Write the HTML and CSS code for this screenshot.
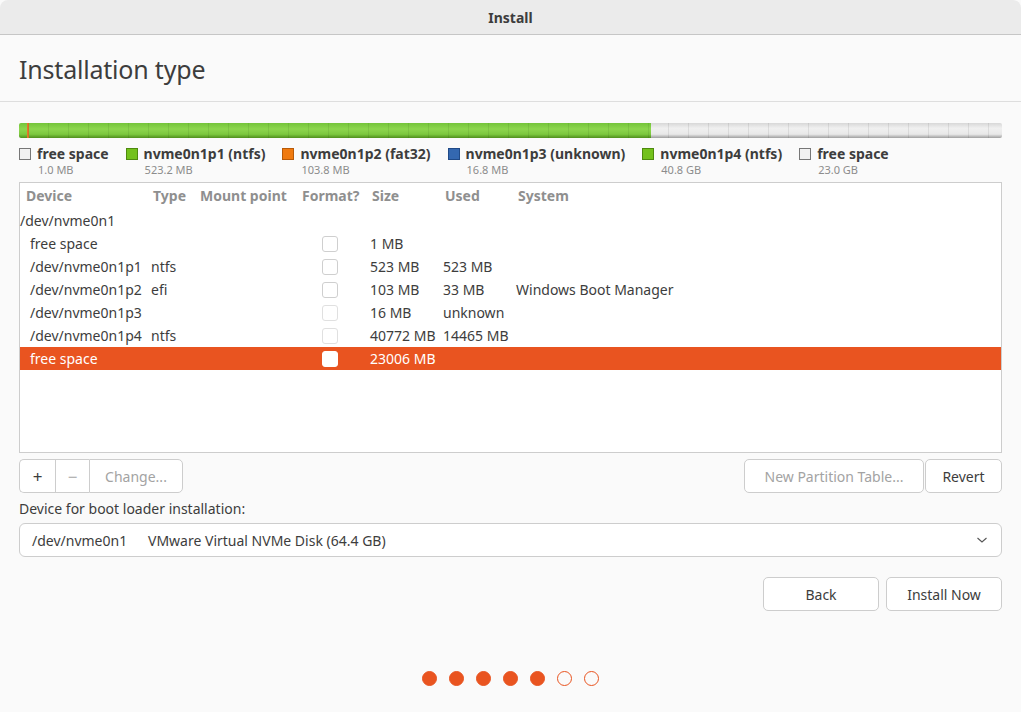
FILE: index.html
```html
<!DOCTYPE html>
<html>
<head>
<meta charset="utf-8">
<link rel="stylesheet" href="styles.css">
</head>
<body>
<div class="window">
  <div class="titlebar">Install</div>
  <div class="content">
    <h1 class="page-title">Installation type</h1>
    <div class="main">
      <div class="pbar">
        <div class="seg seg-free" style="width:0.2px"></div>
        <div class="seg seg-green" style="width:8px"></div>
        <div class="seg seg-orange" style="width:2px"></div>
        <div class="seg seg-blue" style="width:0.3px"></div>
        <div class="seg seg-green" style="width:622px"></div>
        <div class="seg seg-free grow"></div>
      </div>
      <div class="legend">
        <div class="lg-item">
          <span class="swatch sw-free"></span>
          <div class="lg-text"><div class="lg-name">free space</div><div class="lg-size">1.0 MB</div></div>
        </div>
        <div class="lg-item">
          <span class="swatch sw-green"></span>
          <div class="lg-text"><div class="lg-name">nvme0n1p1 (ntfs)</div><div class="lg-size">523.2 MB</div></div>
        </div>
        <div class="lg-item">
          <span class="swatch sw-orange"></span>
          <div class="lg-text"><div class="lg-name">nvme0n1p2 (fat32)</div><div class="lg-size">103.8 MB</div></div>
        </div>
        <div class="lg-item">
          <span class="swatch sw-blue"></span>
          <div class="lg-text"><div class="lg-name">nvme0n1p3 (unknown)</div><div class="lg-size">16.8 MB</div></div>
        </div>
        <div class="lg-item">
          <span class="swatch sw-green"></span>
          <div class="lg-text"><div class="lg-name">nvme0n1p4 (ntfs)</div><div class="lg-size">40.8 GB</div></div>
        </div>
        <div class="lg-item">
          <span class="swatch sw-free"></span>
          <div class="lg-text"><div class="lg-name">free space</div><div class="lg-size">23.0 GB</div></div>
        </div>
      </div>

      <div class="table">
        <div class="row head">
          <div class="c c-dev">Device</div>
          <div class="c c-type">Type</div>
          <div class="c c-mount">Mount point</div>
          <div class="c c-fmt">Format?</div>
          <div class="c c-size">Size</div>
          <div class="c c-used">Used</div>
          <div class="c c-sys">System</div>
        </div>
        <div class="row disk"><div class="c">/dev/nvme0n1</div></div>
        <div class="row">
          <div class="c c-dev ind">free space</div><div class="c c-type"></div><div class="c c-mount"></div>
          <div class="c c-fmt"><span class="cb"></span></div>
          <div class="c c-size">1 MB</div><div class="c c-used"></div><div class="c c-sys"></div>
        </div>
        <div class="row">
          <div class="c c-dev ind">/dev/nvme0n1p1</div><div class="c c-type">ntfs</div><div class="c c-mount"></div>
          <div class="c c-fmt"><span class="cb"></span></div>
          <div class="c c-size">523 MB</div><div class="c c-used">523 MB</div><div class="c c-sys"></div>
        </div>
        <div class="row">
          <div class="c c-dev ind">/dev/nvme0n1p2</div><div class="c c-type">efi</div><div class="c c-mount"></div>
          <div class="c c-fmt"><span class="cb"></span></div>
          <div class="c c-size">103 MB</div><div class="c c-used">33 MB</div><div class="c c-sys">Windows Boot Manager</div>
        </div>
        <div class="row">
          <div class="c c-dev ind">/dev/nvme0n1p3</div><div class="c c-type"></div><div class="c c-mount"></div>
          <div class="c c-fmt"><span class="cb dim"></span></div>
          <div class="c c-size">16 MB</div><div class="c c-used">unknown</div><div class="c c-sys"></div>
        </div>
        <div class="row">
          <div class="c c-dev ind">/dev/nvme0n1p4</div><div class="c c-type">ntfs</div><div class="c c-mount"></div>
          <div class="c c-fmt"><span class="cb dim"></span></div>
          <div class="c c-size">40772 MB</div><div class="c c-used">14465 MB</div><div class="c c-sys"></div>
        </div>
        <div class="row sel">
          <div class="c c-dev ind">free space</div><div class="c c-type"></div><div class="c c-mount"></div>
          <div class="c c-fmt"><span class="cb white"></span></div>
          <div class="c c-size">23006 MB</div><div class="c c-used"></div><div class="c c-sys"></div>
        </div>
      </div>

      <div class="toolbar">
        <div class="btn-group">
          <button class="btn gbtn sq">+</button>
          <button class="btn gbtn sq dis">−</button>
          <button class="btn gbtn dis change">Change...</button>
        </div>
        <div class="spacer"></div>
        <button class="btn dis npt">New Partition Table...</button>
        <button class="btn revert">Revert</button>
      </div>

      <div class="boot-label">Device for boot loader installation:</div>
      <div class="combo">
        <span class="combo-dev">/dev/nvme0n1</span>
        <span class="combo-name">VMware Virtual NVMe Disk (64.4 GB)</span>
        <svg class="chev" width="12" height="8" viewBox="0 0 12 8"><path d="M1.5 2 L6 6 L10.5 2" fill="none" stroke="#555" stroke-width="1.1"/></svg>
      </div>

      <div class="actions">
        <button class="btn act">Back</button>
        <button class="btn act">Install Now</button>
      </div>
    </div>
    <div class="dots">
      <span class="dot on"></span><span class="dot on"></span><span class="dot on"></span><span class="dot on"></span><span class="dot on"></span><span class="dot"></span><span class="dot"></span>
    </div>
  </div>
</div>
</body>
</html>
```

FILE: styles.css
```css
* { box-sizing: border-box; }
html, body { margin: 0; padding: 0; }
body {
  width: 1021px;
  height: 712px;
  overflow: hidden;
  background: #fafafa;
  font-family: "Noto Sans", "Open Sans", sans-serif;
  color: #3d3d3d;
  font-size: 14px;
}
.window {
  width: 1021px;
  height: 712px;
  display: flex;
  flex-direction: column;
  background: #fafafa;
  border-radius: 8px 8px 0 0;
  overflow: hidden;
}
.titlebar {
  height: 35px;
  flex: none;
  background: #ebebeb;
  border-bottom: 1px solid #c6c6c6;
  display: flex;
  align-items: center;
  justify-content: center;
  font-weight: 700;
  font-size: 14px;
  color: #3d3d3d;
}
.content {
  flex: 1;
  display: flex;
  flex-direction: column;
}
.page-title {
  margin: 0;
  height: 67px;
  padding: 17px 19px 0;
  font-weight: 400;
  font-size: 25px;
  color: #3d3d3d;
  border-bottom: 1px solid #dedede;
  letter-spacing: -0.2px;
}
.main {
  padding: 21px 19px 0 19px;
  display: flex;
  flex-direction: column;
}
.pbar {
  height: 15px;
  display: flex;
  position: relative;
  border-radius: 2px;
  overflow: hidden;
}
.pbar::after {
  content: "";
  position: absolute;
  inset: 0;
  background: repeating-linear-gradient(to right, transparent 0, transparent 9px, rgba(0,0,0,0.08) 9px, rgba(0,0,0,0.08) 10px, transparent 10px, transparent 20px);
  pointer-events: none;
}
.seg { height: 100%; flex: none; }
.seg.grow { flex: 1; }
.seg-green { background: linear-gradient(#74c43a 0%, #8dd64e 40%, #7cc83f 75%, #4f8f1c 100%); }
.seg-orange { background: #e6772a; }
.seg-blue { background: #3465a4; }
.seg-free { background: linear-gradient(#d8d8d8 0%, #f0f0f0 35%, #e8e8e8 75%, #9e9e9e 100%); }

.legend {
  display: flex;
  margin-top: 6px;
  height: 38px;
}
.lg-item {
  display: flex;
  align-items: flex-start;
  margin-right: 17px;
}
.swatch {
  width: 12px;
  height: 12px;
  margin-top: 4px;
  margin-right: 6px;
  border: 1px solid #888;
  flex: none;
}
.sw-free { background: #f2f2f2; border-color: #777; }
.sw-green { background: #73c11c; border-color: #4e8a0e; }
.sw-orange { background: #f07a0f; border-color: #b85a08; }
.sw-blue { background: #3468b0; border-color: #204a87; }
.lg-name {
  font-weight: 700;
  font-size: 14px;
  line-height: 19px;
  color: #3d3d3d;
}
.lg-size {
  font-size: 11px;
  color: #8c8c8c;
  line-height: 14px;
  padding-left: 1px;
}

.table {
  height: 271px;
  background: #fff;
  border: 1px solid #cdcdcd;
  display: flex;
  flex-direction: column;
}
.row {
  display: flex;
  height: 23px;
  align-items: center;
  font-size: 14px;
  color: #3d3d3d;
  flex: none;
}
.row.head {
  height: 24px;
  margin-bottom: 2px;
  color: #8f8f8f;
  font-weight: 700;
  font-size: 14px;
}
.head .c:not(.c-dev) { padding-left: 2px; }
.c { white-space: nowrap; }
.c-dev { width: 131px; padding-left: 6px; }
.c-dev.ind { padding-left: 10px; }
.c-type { width: 47px; }
.c-mount { width: 102px; }
.c-fmt { width: 70px; }
.c-size { width: 73px; }
.c-used { width: 73px; }
.c-sys { flex: 1; }
.row:not(.head) .c-fmt { padding-left: 22px; display: flex; align-items: center; }
.cb {
  display: block;
  width: 16px;
  height: 16px;
  border: 1px solid #cfcfcf;
  border-radius: 3px;
  background: #fff;
}
.cb.dim { border-color: #e0e0e0; }
.cb.white { border-color: #fff; background: #fff; }
.row.sel {
  background: #e95420;
  color: #fff;
}

.toolbar {
  display: flex;
  margin-top: 6px;
  height: 34px;
}
.spacer { flex: 1; }
.btn {
  font-family: inherit;
  font-size: 14px;
  color: #3d3d3d;
  background: #fff;
  border: 1px solid #cdcdcd;
  border-radius: 5px;
  height: 34px;
  padding: 0;
  cursor: default;
}
.btn.dis { color: #a3a3a3; }
.btn-group { display: flex; }
.gbtn { border-radius: 0; border-right: none; }
.gbtn:first-child { border-radius: 5px 0 0 5px; }
.gbtn:last-child { border-radius: 0 5px 5px 0; border-right: 1px solid #cdcdcd; }
.sq { width: 36px; font-size: 17px; }
.gbtn.sq:nth-child(2) { width: 34px; }
.change { width: 94px; }
.npt { width: 180px; }
.revert { width: 77px; margin-left: 1px; }

.boot-label {
  margin-top: 6px;
  height: 24px;
  line-height: 19px;
  font-size: 14px;
  color: #3d3d3d;
}
.combo {
  height: 34px;
  background: #fff;
  border: 1px solid #cdcdcd;
  border-radius: 6px;
  display: flex;
  align-items: center;
  padding-left: 12px;
  padding-right: 13px;
  font-size: 14px;
}
.combo-dev { width: 116px; }
.combo-name { flex: 1; }
.chev { flex: none; }

.actions {
  display: flex;
  justify-content: flex-end;
  gap: 7px;
  margin-top: 20px;
}
.act { width: 116px; }

.dots {
  display: flex;
  justify-content: center;
  gap: 12px;
  margin-top: 60px;
}
.dot {
  width: 15px;
  height: 15px;
  border-radius: 50%;
  border: 1.5px solid #e95420;
  background: transparent;
}
.dot.on { background: #e95420; }
```
